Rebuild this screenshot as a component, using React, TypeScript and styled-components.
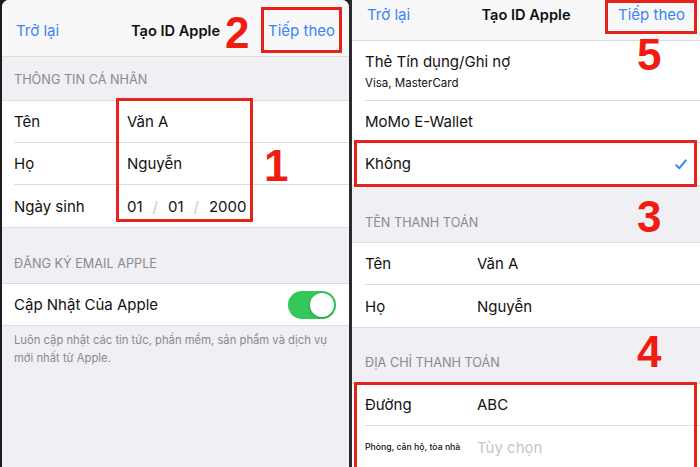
import React from "react";
import styled, { createGlobalStyle } from "styled-components";

const Global = createGlobalStyle`
  html, body { margin: 0; padding: 0; background: #1a1a1a; }
  * { box-sizing: border-box; }
`;

const BLUE = "#3a84f6";
const SEP = "#dcdce0";
const GRAY_BG = "#efeff4";
const RED = "#e8221b";

const Stage = styled.div`
  position: relative;
  width: 700px;
  height: 467px;
  overflow: hidden;
  display: flex;
  background: #1c1c1e;
  font-family: Inter, "Liberation Sans", sans-serif;
  color: #111;
`;

const Panel = styled.div<{ $left: number; $width: number; $radius: number }>`
  margin-left: ${(p) => p.$left}px;
  width: ${(p) => p.$width}px;
  height: 467px;
  background: ${GRAY_BG};
  border-top-left-radius: ${(p) => p.$radius}px;
  border-top-right-radius: ${(p) => p.$radius}px;
  overflow: hidden;
  display: flex;
  flex-direction: column;
`;

const NavBar = styled.div<{ $height: number; $pt: number; $pb: number; $px: number }>`
  height: ${(p) => p.$height}px;
  flex-shrink: 0;
  background: #f8f8f9;
  border-bottom: 1px solid ${SEP};
  padding: ${(p) => p.$pt}px ${(p) => p.$px}px ${(p) => p.$pb}px;
  display: grid;
  grid-template-columns: 1fr auto 1fr;
  align-items: center;
`;

const NavLink = styled.span<{ $end?: boolean }>`
  color: ${BLUE};
  font-size: 15px;
  line-height: 18px;
  justify-self: ${(p) => (p.$end ? "end" : "start")};
`;

const NavTitle = styled.span`
  font-weight: 600;
  font-size: 14.6px;
  line-height: 18px;
  color: #111;
`;

const SectionHeader = styled.div<{ $height: number; $pb: number; $pl: number }>`
  height: ${(p) => p.$height}px;
  flex-shrink: 0;
  display: flex;
  align-items: flex-end;
  padding: 0 0 ${(p) => p.$pb}px ${(p) => p.$pl}px;
  color: #8a8a8f;
  font-size: 12.7px;
  line-height: 16px;
`;

const Group = styled.div`
  background: #fff;
  border-top: 1px solid ${SEP};
  border-bottom: 1px solid ${SEP};
  flex-shrink: 0;
`;

const GroupTop = styled(Group)`
  border-top: none;
`;

const Row = styled.div<{ $inset: number; $height?: number }>`
  height: ${(p) => p.$height ?? 42}px;
  margin-left: ${(p) => p.$inset}px;
  padding-right: 13px;
  display: flex;
  align-items: center;
  border-bottom: 1px solid ${SEP};
  font-size: 15px;
  &:last-child { border-bottom: none; }
`;

const StackRow = styled(Row)`
  flex-direction: column;
  align-items: flex-start;
  justify-content: flex-start;
  padding-top: 12px;
`;

const Label = styled.span<{ $w: number; $small?: boolean }>`
  width: ${(p) => p.$w}px;
  flex-shrink: 0;
  font-size: ${(p) => (p.$small ? "8.7px" : "15px")};
  font-weight: ${(p) => (p.$small ? 500 : 400)};
  white-space: nowrap;
`;

const Value = styled.span<{ $placeholder?: boolean }>`
  flex: 1;
  font-size: 15px;
  color: ${(p) => (p.$placeholder ? "#c5c5c9" : "#111")};
`;

const DateSep = styled.span`
  color: #c8c8cc;
  margin: 0 10px;
`;

const Title = styled.span`
  font-size: 15px;
  line-height: 18px;
`;

const Sub = styled.span`
  font-size: 11.5px;
  line-height: 16px;
  margin-top: 4px;
`;

const Spacer = styled.span`
  flex: 1;
`;

const Toggle = styled.div`
  width: 48px;
  height: 28px;
  border-radius: 14px;
  background: #34c759;
  position: relative;
  flex-shrink: 0;
  &::after {
    content: "";
    position: absolute;
    right: 2px;
    top: 2px;
    width: 24px;
    height: 24px;
    border-radius: 50%;
    background: #fff;
    box-shadow: 0 1px 3px rgba(0,0,0,0.25);
  }
`;

const Footer = styled.div`
  padding: 5px 14px 0 12px;
  color: #8a8a8f;
  font-size: 11.25px;
  line-height: 18px;
`;

const Divider = styled.div`
  width: 3px;
  background: #2a2a2c;
`;

const RedBox = styled.div<{ $x: number; $y: number; $w: number; $h: number }>`
  position: absolute;
  left: ${(p) => p.$x}px;
  top: ${(p) => p.$y}px;
  width: ${(p) => p.$w}px;
  height: ${(p) => p.$h}px;
  border: 3px solid ${RED};
  pointer-events: none;
`;

const Num = styled.div<{ $x: number; $y: number }>`
  position: absolute;
  left: ${(p) => p.$x}px;
  top: ${(p) => p.$y}px;
  font-family: "Liberation Sans", Arial, sans-serif;
  font-weight: 700;
  font-size: 44px;
  line-height: 44px;
  color: #f01c10;
`;

const Check = () => (
  <svg width="12" height="11" viewBox="0 0 12 11">
    <path d="M1.2 6.2 L4.4 9.2 L10.8 1.4" fill="none" stroke={BLUE} strokeWidth="2" strokeLinecap="round" strokeLinejoin="round" />
  </svg>
);

export default function App() {
  return (
    <>
      <Global />
      <Stage>
        <Panel $left={2} $width={347} $radius={7}>
          <NavBar $height={57} $pt={6} $pb={0} $px={14}>
            <NavLink>Trở lại</NavLink>
            <NavTitle>Tạo ID Apple</NavTitle>
            <NavLink $end>Tiếp theo</NavLink>
          </NavBar>
          <SectionHeader $height={43} $pb={12} $pl={12}>THÔNG TIN CÁ NHÂN</SectionHeader>
          <Group>
            <Row $inset={12}>
              <Label $w={113}>Tên</Label>
              <Value>Văn A</Value>
            </Row>
            <Row $inset={12}>
              <Label $w={113}>Họ</Label>
              <Value>Nguyễn</Value>
            </Row>
            <Row $inset={12}>
              <Label $w={113}>Ngày sinh</Label>
              <Value>
                01<DateSep>/</DateSep>01<DateSep>/</DateSep>2000
              </Value>
            </Row>
          </Group>
          <SectionHeader $height={55} $pb={11} $pl={12}>ĐĂNG KÝ EMAIL APPLE</SectionHeader>
          <Group>
            <Row $inset={12} $height={41}>
              <Title>Cập Nhật Của Apple</Title>
              <Spacer />
              <Toggle />
            </Row>
          </Group>
          <Footer>
            Luôn cập nhật các tin tức, phần mềm, sản phẩm và dịch vụ
            <br />
            mới nhất từ Apple.
          </Footer>
        </Panel>
        <Divider />
        <Panel $left={0} $width={348} $radius={0}>
          <NavBar $height={41} $pt={0} $pb={10} $px={15}>
            <NavLink>Trở lại</NavLink>
            <NavTitle>Tạo ID Apple</NavTitle>
            <NavLink $end>Tiếp theo</NavLink>
          </NavBar>
          <GroupTop>
            <StackRow $inset={13} $height={60}>
              <Title>Thẻ Tín dụng/Ghi nợ</Title>
              <Sub>Visa, MasterCard</Sub>
            </StackRow>
            <Row $inset={13}>
              <Title>MoMo E-Wallet</Title>
            </Row>
            <Row $inset={13}>
              <Title>Không</Title>
              <Spacer />
              <Check />
            </Row>
          </GroupTop>
          <SectionHeader $height={56} $pb={11} $pl={13}>TÊN THANH TOÁN</SectionHeader>
          <Group>
            <Row $inset={13}>
              <Label $w={112}>Tên</Label>
              <Value>Văn A</Value>
            </Row>
            <Row $inset={13}>
              <Label $w={112}>Họ</Label>
              <Value>Nguyễn</Value>
            </Row>
          </Group>
          <SectionHeader $height={55} $pb={12} $pl={13}>ĐỊA CHỈ THANH TOÁN</SectionHeader>
          <Group>
            <Row $inset={13}>
              <Label $w={112}>Đường</Label>
              <Value>ABC</Value>
            </Row>
            <Row $inset={13}>
              <Label $w={112} $small>Phòng, căn hộ, tòa nhà</Label>
              <Value $placeholder>Tùy chọn</Value>
            </Row>
          </Group>
        </Panel>

        <RedBox $x={261} $y={7} $w={81} $h={46} />
        <Num $x={225} $y={11}>2</Num>
        <RedBox $x={116} $y={98} $w={137} $h={124} />
        <Num $x={264} $y={144}>1</Num>
        <RedBox $x={605} $y={0} $w={92} $h={34} />
        <Num $x={637} $y={33}>5</Num>
        <RedBox $x={354} $y={140} $w={343} $h={47} />
        <Num $x={637} $y={195}>3</Num>
        <RedBox $x={354} $y={382} $w={343} $h={100} />
        <Num $x={637} $y={330}>4</Num>
      </Stage>
    </>
  );
}
